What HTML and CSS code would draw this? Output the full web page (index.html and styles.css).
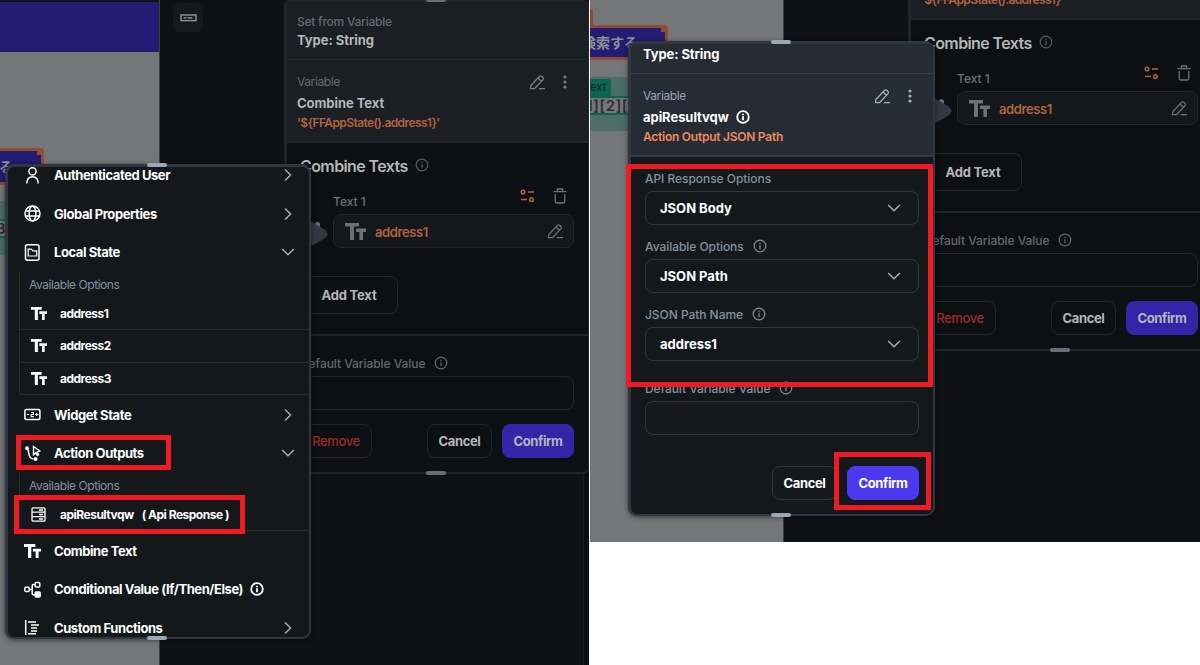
FILE: index.html
```html
<!DOCTYPE html>
<html lang="en">
  <head>
    <meta charset="utf-8">
    <title>Set from Variable</title>
    <link rel="stylesheet" href="styles.css">
  </head>
  <body>
    <svg class="sprite" width="0" height="0">
      <symbol id="pencil" viewBox="0 0 18 18"><path d="M2 12.2 11.2 2.4a1.6 1.6 0 0 1 2.3 0l1.3 1.3a1.6 1.6 0 0 1 0 2.3L6 15.4H1.6zM9.6 4.2l3.7 3.7M10.5 15.5H17"/></symbol>
      <symbol id="dots" viewBox="0 0 4 14"><g fill="currentColor" stroke="none"><circle cx="2" cy="2" r="1.6"/><circle cx="2" cy="7" r="1.6"/><circle cx="2" cy="12" r="1.6"/></g></symbol>
      <symbol id="info" viewBox="0 0 14 14"><circle cx="7" cy="7" r="5.8"/><path d="M7 6.3v4M7 3.7v1.5"/></symbol>
      <symbol id="right" viewBox="0 0 8 14"><path d="M1 1.5 6.6 7 1 12.5"/></symbol>
      <symbol id="down" viewBox="0 0 14 8"><path d="M1.2 1 7 6.8 12.8 1"/></symbol>
      <symbol id="tt" viewBox="0 0 21 17"><path fill="currentColor" stroke="none" d="M0 0h14v3.6H9V17H5V3.6H0zM11 5.6h10V9h-3v8h-3.600V9H11z"/></symbol>
      <symbol id="switches" viewBox="0 0 15 14"><circle cx="3" cy="3" r="1.8"/><path d="M8 3h6M1 10.600h6"/><circle cx="11.500" cy="10.600" r="1.800"/></symbol>
      <symbol id="trash" viewBox="0 0 14 16"><path d="M.5 3.600h13M4.500 3.400V1h5v2.400M2.200 6v7.500q0 1.500 1.500 1.500h6.600q1.500 0 1.500-1.500V6"/></symbol>
      <symbol id="user" viewBox="0 0 17 17"><circle cx="8.500" cy="4.300" r="3.600"/><path d="M2.700 16.500c.3-4.400 2-6.700 5.800-6.700s5.500 2.300 5.800 6.700"/></symbol>
      <symbol id="globe" viewBox="0 0 17 17"><circle cx="8.500" cy="8.500" r="7.500"/><ellipse cx="8.500" cy="8.500" rx="3.400" ry="7.500"/><path d="M1.600 6h13.800M1.600 11h13.800"/></symbol>
      <symbol id="state" viewBox="0 0 17 17"><rect x="1.500" y=".8" width="13.500" height="15.400" rx="2"/><path stroke-width="1.200" d="M4.200 5.200h3.200l1.300 1.600h4v5.200H4.200z"/></symbol>
      <symbol id="widget" viewBox="0 0 17 12"><rect x=".9" y=".9" width="15" height="10.200" rx="1.500"/><path stroke-width="1.200" d="M2.800 6h2.400M7 4h2.400v2H7.200v2.200h2.600M11 6h3.400M12.700 4.600v2.800"/></symbol>
      <symbol id="action" viewBox="0 0 17 17"><circle cx="3" cy="3.200" r="1.900" fill="currentColor" stroke="none"/><path d="M3.200 4c3 2-.2 9.500 6 10"/><circle cx="11.500" cy="14" r="2" fill="currentColor" stroke="none"/><path stroke-width="1.400" d="M9.500 1.500v8.300l2.200-1.900 1.600 2.600 1.300-.8-1.500-2.500 2.700-1.200z"/></symbol>
      <symbol id="server" viewBox="0 0 15 15"><rect x="1" y=".8" width="13" height="13.400" rx="1"/><path d="M1 5.200h13M1 9.700h13M8 3h4M8 7.500h4M8 12h4"/></symbol>
      <symbol id="branch" viewBox="0 0 17 17"><rect x=".8" y="6.200" width="4.400" height="4.400" rx="1"/><path d="M5.200 8.400h3M11 3.500H9.200q-1 0-1 1v8.200q0 1 1 1H11"/><rect x="11.200" y="1.400" width="4.600" height="4.600" rx="1"/><rect x="11.200" y="11" width="5" height="5" rx="1" fill="currentColor"/></symbol>
      <symbol id="functions" viewBox="0 0 17 17"><path d="M1.700 1v15M4 3h8M7 6h8M7 9h6M7 12h6M4 14.800h8"/></symbol>
      <symbol id="card" viewBox="0 0 17 8"><rect x="1" y="1" width="15" height="5.600"/><path d="M3.500 3.800h3M7.500 3.800h5"/></symbol>
    </svg>

    <div class="board">
      <!-- left screen -->
      <div class="screen screen-left">
        <div class="phone">
          <div class="appbar"></div>
          <div class="search-btn">る</div>
          <div class="text-widget"><div class="text-line">3</div></div>
        </div>
        <div class="tool"><svg class="icon card"><use href="#card"/></svg></div>
        <div class="rail"></div>

        <div class="panel">
          <div class="handle top"></div>
          <div class="panel-head">
            <p class="caption semi">Set from Variable</p>
            <p class="title">Type: String</p>
          </div>
          <div class="panel-var">
            <div class="var-top">
              <p class="caption">Variable</p>
              <svg class="icon pencil"><use href="#pencil"/></svg>
              <svg class="icon dots"><use href="#dots"/></svg>
            </div>
            <p class="title">Combine Text</p>
            <p class="code">'${FFAppState().address1}'</p>
          </div>
          <div class="combine">
            <div class="combine-title">Combine Texts <svg class="icon info"><use href="#info"/></svg></div>
            <div class="text-top">
              <span>Text 1</span>
              <svg class="icon switches"><use href="#switches"/></svg>
              <svg class="icon trash"><use href="#trash"/></svg>
            </div>
            <div class="text-field">
              <svg class="icon tt-big"><use href="#tt"/></svg>
              <span>address1</span>
              <svg class="icon pencil"><use href="#pencil"/></svg>
            </div>
            <div class="btn add">Add Text</div>
          </div>
          <div class="panel-foot">
            <div class="label">Default Variable Value <svg class="icon info"><use href="#info"/></svg></div>
            <div class="input"></div>
            <div class="buttons">
              <div class="btn remove">Remove</div>
              <div class="btn cancel">Cancel</div>
              <div class="btn confirm">Confirm</div>
            </div>
          </div>
          <div class="handle bottom"></div>
        </div>

        <div class="node"></div>
        <div class="arrow"></div>
        <div class="popover menu">
          <div class="handle top"></div>
          <div class="menu-clip">
            <div class="menu-list">
              <div class="item"><svg class="icon i17"><use href="#user"/></svg><span>Authenticated User</span><svg class="icon right"><use href="#right"/></svg></div>
              <div class="item"><svg class="icon i17"><use href="#globe"/></svg><span>Global Properties</span><svg class="icon right"><use href="#right"/></svg></div>
              <div class="item"><svg class="icon i17"><use href="#state"/></svg><span>Local State</span><svg class="icon down"><use href="#down"/></svg></div>
              <div class="sub">
                <p class="sub-label">Available Options</p>
                <div class="sub-item"><svg class="icon tt-small"><use href="#tt"/></svg>address1</div>
                <div class="sub-item"><svg class="icon tt-small"><use href="#tt"/></svg>address2</div>
                <div class="sub-item"><svg class="icon tt-small"><use href="#tt"/></svg>address3</div>
              </div>
              <div class="item"><svg class="icon i17"><use href="#widget"/></svg><span>Widget State</span><svg class="icon right"><use href="#right"/></svg></div>
              <div class="item"><svg class="icon i17"><use href="#action"/></svg><span>Action Outputs</span><svg class="icon down"><use href="#down"/></svg></div>
              <div class="sub">
                <p class="sub-label">Available Options</p>
                <div class="sub-item"><svg class="icon server"><use href="#server"/></svg>apiResultvqw <span class="type">( Api Response )</span></div>
              </div>
              <div class="item"><svg class="icon tt-mid"><use href="#tt"/></svg><span>Combine Text</span></div>
              <div class="item cond"><svg class="icon i17"><use href="#branch"/></svg><span>Conditional Value (If/Then/Else)</span><svg class="icon info"><use href="#info"/></svg></div>
              <div class="item"><svg class="icon i17"><use href="#functions"/></svg><span>Custom Functions</span><svg class="icon right"><use href="#right"/></svg></div>
            </div>
          </div>
          <div class="handle bottom"></div>
        </div>

        <div class="mark mark-action"></div>
        <div class="mark mark-result"></div>
      </div>

      <!-- right screen -->
      <div class="screen screen-right">
        <div class="phone">
          <div class="orange-tab"></div>
          <div class="search-btn">検索する</div>
          <div class="text-widget">
            <div class="tag">Text</div>
            <div class="text-line">[1][2][3]</div>
          </div>
        </div>

        <div class="panel">
          <div class="panel-head">
            <p class="caption semi">Set from Variable</p>
            <p class="title">Type: String</p>
          </div>
          <div class="panel-var">
            <div class="var-top">
              <p class="caption">Variable</p>
              <svg class="icon pencil"><use href="#pencil"/></svg>
              <svg class="icon dots"><use href="#dots"/></svg>
            </div>
            <p class="title">Combine Text</p>
            <p class="code">'${FFAppState().address1}'</p>
          </div>
          <div class="combine">
            <div class="combine-title">Combine Texts <svg class="icon info"><use href="#info"/></svg></div>
            <div class="text-top">
              <span>Text 1</span>
              <svg class="icon switches"><use href="#switches"/></svg>
              <svg class="icon trash"><use href="#trash"/></svg>
            </div>
            <div class="text-field">
              <svg class="icon tt-big"><use href="#tt"/></svg>
              <span>address1</span>
              <svg class="icon pencil"><use href="#pencil"/></svg>
            </div>
            <div class="btn add">Add Text</div>
          </div>
          <div class="panel-foot">
            <div class="label">Default Variable Value <svg class="icon info"><use href="#info"/></svg></div>
            <div class="input"></div>
            <div class="buttons">
              <div class="btn remove">Remove</div>
              <div class="btn cancel">Cancel</div>
              <div class="btn confirm">Confirm</div>
            </div>
          </div>
          <div class="handle bottom"></div>
        </div>

        <div class="node"></div>
        <div class="arrow"></div>
        <div class="popover result">
          <div class="handle top"></div>
          <div class="result-head">Type: String</div>
          <div class="result-var">
            <div class="var-top">
              <p class="caption">Variable</p>
              <svg class="icon pencil"><use href="#pencil"/></svg>
              <svg class="icon dots"><use href="#dots"/></svg>
            </div>
            <p class="title">apiResultvqw <svg class="icon info"><use href="#info"/></svg></p>
            <p class="code">Action Output JSON Path</p>
          </div>
          <div class="result-body">
            <div class="label">API Response Options</div>
            <div class="input select">JSON Body <svg class="icon down"><use href="#down"/></svg></div>
            <div class="label">Available Options <svg class="icon info"><use href="#info"/></svg></div>
            <div class="input select">JSON Path <svg class="icon down"><use href="#down"/></svg></div>
            <div class="label">JSON Path Name <svg class="icon info"><use href="#info"/></svg></div>
            <div class="input select">address1 <svg class="icon down"><use href="#down"/></svg></div>
            <div class="label label-last">Default Variable Value <svg class="icon info"><use href="#info"/></svg></div>
            <div class="input"></div>
            <div class="buttons">
              <div class="btn cancel">Cancel</div>
              <div class="btn confirm">Confirm</div>
            </div>
          </div>
          <div class="handle bottom"></div>
        </div>

        <div class="mark mark-options"></div>
        <div class="mark mark-confirm"></div>
      </div>
    </div>
  </body>
</html>
```
FILE: styles.css
```css
* {
  box-sizing: border-box;
}
body {
  margin: 0;
  background: #fff;
  font-family: Inter, "Noto Sans CJK JP", sans-serif;
  font-size: 13px;
  color: #fff;
  overflow: hidden;
}
p {
  margin: 0;
}
.sprite {
  position: absolute;
}
.board {
  display: flex;
  align-items: flex-start;
  gap: 1px;
}
.screen {
  position: relative;
  overflow: hidden;
  background: #0f1114;
  white-space: nowrap;
}
.screen-left {
  width: 589px;
  height: 665px;
}
.screen-right {
  width: 610px;
  height: 542px;
}

/* icons */
.icon {
  flex: none;
  fill: none;
  stroke: currentColor;
  stroke-width: 1.5;
}
.pencil { width: 17px; height: 17px; stroke-width: 1.3; }
.dots { width: 4px; height: 14px; }
.info { width: 14px; height: 14px; stroke-width: 1.2; }
.right { width: 8px; height: 14px; color: #a3b1c2; stroke-width: 1.4; }
.down { width: 14px; height: 8px; color: #a3b1c2; stroke-width: 1.4; }
.switches { width: 15px; height: 14px; }
.trash { width: 14px; height: 16px; stroke-width: 1.3; }
.tt-big { width: 21px; height: 17px; }
.tt-mid { width: 17px; height: 14px; }
.tt-small { width: 16px; height: 13px; }
.i17 { width: 17px; height: 17px; }
.server { width: 15px; height: 15px; stroke-width: 1.3; }
.card { width: 17px; height: 8px; color: #8b8c8d; }

/* phone canvas */
.phone {
  position: absolute;
  left: 0;
  top: 0;
  width: 160px;
  height: 100%;
  background: #757678;
  border-right: 1px solid #3b3c3e;
  overflow: hidden;
}
.screen-right .phone {
  width: 194px;
}
.screen-left .phone {
  background: linear-gradient(#0f1114 2px, #757678 2px);
}
.appbar {
  height: 50px;
  margin: 2px 0 96px;
  background: #241b74;
}
.search-btn {
  height: 37px;
  width: 44px;
  border: 3px solid #8c4d31;
  border-left: 0;
  border-radius: 0 4px 4px 0;
  background: linear-gradient(#8c4d31, #8c4d31) right top / 4px 4px no-repeat #241b74;
  color: #8f8f91;
  font-weight: 700;
  font-size: 14px;
  line-height: 30px;
}
.screen-left .search-btn {
  line-height: 32px;
  text-indent: -1px;
}
.text-widget {
  height: 54px;
  margin-top: 17px;
  background: #4d6d69;
}
.text-line {
  height: 19px;
  border: solid #0c6551;
  border-width: 2px 0;
  font-size: 15px;
  line-height: 15px;
  font-weight: 600;
  color: #2c2f30;
  background: #757678;
  text-indent: -10px;
  letter-spacing: 0.6px;
}
.screen-left .text-line {
  margin-top: 35px;
  text-indent: -4px;
}
.tag {
  width: 21px;
  height: 17px;
  padding-top: 1px;
  background: #0c6551;
  border-radius: 0 3px 0 0;
  color: #10201d;
  font-size: 11px;
  text-indent: -6px;
}
.screen-right .text-widget {
  padding-top: 2px;
}
.screen-left .text-widget {
  margin-top: 16px;
  padding-top: 0.1px;
}
.screen-left .text-line {
  margin-top: 18px;
}
.orange-tab {
  width: 3px;
  height: 16px;
  margin-top: 9px;
  background: #8c4d31;
}
.screen-right .search-btn {
  width: 78px;
  height: 35px;
  text-indent: -8px;
}
.tool {
  position: absolute;
  left: 173px;
  top: 3px;
  width: 30px;
  height: 29px;
  border-radius: 7px;
  background: #15191c;
  display: flex;
  align-items: center;
  justify-content: center;
}
.rail {
  position: absolute;
  left: 583px;
  top: 474px;
  width: 6px;
  height: 191px;
  background: #0c0d10;
  border-left: 1px solid #1a1c21;
}

/* dimmed panel below the popovers */
.panel {
  position: absolute;
  left: 284px;
  top: 0;
  width: 305px;
  height: 474px;
  border: 2px solid #20262d;
  border-left-width: 3px;
  border-right-width: 1px;
  border-radius: 6px;
  background: #0d1012;
  color: #b5b6b7;
}
.screen-right .panel {
  left: 318px;
  top: -123px;
}
.caption {
  font-size: 12px;
  line-height: 16px;
  letter-spacing: -0.4px;
  color: #636a75;
}
.semi {
  font-weight: 500;
  letter-spacing: -0.25px;
}
.title {
  font-size: 13px;
  line-height: 20px;
  font-weight: 700;
  letter-spacing: -0.05px;
}
.panel-head {
  height: 58px;
  padding: 12px 11px 0 10px;
  background: #1b1e23;
  border-bottom: 1px solid #22292f;
}
.panel-var {
  height: 83px;
  padding: 14px 11px 0 10px;
  background: #1b1e23;
  border-bottom: 2px solid #20262d;
}
.var-top {
  display: flex;
  align-items: center;
  height: 16px;
  padding-right: 10px;
  color: #777f89;
}
.var-top .caption {
  flex: 1;
}
.var-top .dots {
  margin-left: 17px;
}
.panel-var .title {
  margin-top: 3px;
}
.code {
  font-size: 12px;
  line-height: 20px;
  font-weight: 600;
  letter-spacing: -0.6px;
  color: #b16240;
}
.combine {
  height: 193px;
  padding: 12px 14px 0 13px;
  border-bottom: 2px solid #20262d;
}
.combine-title {
  display: flex;
  align-items: center;
  gap: 7px;
  height: 22px;
  font-size: 16px;
  font-weight: 600;
  letter-spacing: -0.6px;
}
.combine-title .info {
  color: #565c63;
  margin-top: -3px;
}
.text-top {
  display: flex;
  align-items: center;
  height: 16px;
  margin: 11px 7px 0 33px;
  color: #6b7178;
  font-size: 12px;
  font-weight: 500;
}
.text-top span {
  flex: 1;
  padding-top: 11px;
}
.text-top .switches {
  color: #b16240;
}
.text-top .trash {
  margin-left: 18px;
}
.text-field {
  display: flex;
  align-items: center;
  height: 34px;
  margin: 10px 0 28px 33px;
  padding: 0 9px 0 11px;
  border: 1px solid #22262b;
  border-radius: 8px;
  background: #15181b;
  color: #6b7178;
}
.text-field span {
  flex: 1;
  margin-left: 9px;
  padding-top: 1px;
  color: #b16240;
  font-weight: 600;
  letter-spacing: -0.4px;
}
.btn {
  display: flex;
  align-items: center;
  justify-content: center;
  height: 34px;
  border: 1px solid #22262b;
  border-radius: 8px;
  font-weight: 700;
  letter-spacing: -0.4px;
}
.btn.add {
  width: 98px;
  height: 38px;
  letter-spacing: -0.2px;
}
.panel-foot {
  padding: 17px 14px 0 13px;
}
.label {
  display: flex;
  align-items: center;
  gap: 9px;
  height: 20px;
  font-size: 12px;
  font-weight: 500;
  letter-spacing: -0.05px;
  color: #62686f;
}
.input {
  height: 34px;
  border: 1px solid #22262b;
  border-radius: 8px;
}
.panel-foot .input {
  margin: 3px 0 14px;
}
.buttons {
  display: flex;
  justify-content: flex-end;
  gap: 10px;
}
.cancel {
  width: 65px;
}
.confirm {
  width: 72px;
  background: #3425a8;
  border-color: #3425a8;
}
.remove {
  width: 72px;
  margin-right: auto;
  color: #9c2b2b;
  font-weight: 500;
}
.handle {
  position: absolute;
  left: 139px;
  width: 20px;
  height: 4px;
  border-radius: 2px;
  background: #666e77;
}
.handle.top {
  top: -4px;
}
.handle.bottom {
  bottom: -3px;
}

/* popovers */
.popover {
  position: absolute;
  width: 306px;
  height: 475px;
  border: 3px solid #2e3742;
  border-right-width: 2px;
  border-bottom-width: 2px;
  border-radius: 9px;
  background: #14181b;
  box-shadow: 0 1px 5px rgba(0, 0, 0, 0.55);
}
.popover .handle {
  left: 139px;
  background: #9aa7b5;
}
.menu {
  left: 5px;
  top: 164px;
}
.node {
  position: absolute;
  left: 315px;
  top: 222px;
  width: 5px;
  height: 6px;
  border-radius: 3px;
  background: #666a6f;
}
.arrow {
  position: absolute;
  left: 310px;
  top: 221px;
  width: 18px;
  height: 26px;
  background: #323943;
  clip-path: polygon(0 0, 85% 35%, 100% 50%, 85% 65%, 0 100%);
}
.screen-right .node {
  left: 349px;
  top: 99px;
}
.screen-right .arrow {
  left: 344px;
  top: 98px;
}
.menu-clip {
  height: 470px;
  overflow: hidden;
  border-radius: 6px;
}
.menu-list {
  margin-top: -11px;
}
.item {
  display: flex;
  align-items: center;
  height: 38.5px;
  padding: 0 17px 0 16px;
  font-weight: 700;
  letter-spacing: -0.42px;
}
.item span {
  flex: 1;
  margin-left: 13px;
}
.item .down {
  margin-right: -3px;
}
.item.cond span {
  flex: none;
}
.item .info {
  margin-left: 7px;
  stroke-width: 1.8;
}
.sub {
  margin: 0 0 0.5px 11px;
  border-left: 1px solid #252a2f;
}
.sub-label {
  height: 26px;
  padding-left: 9px;
  font-size: 12px;
  line-height: 26px;
  letter-spacing: -0.5px;
  color: #8491a3;
  letter-spacing: -0.45px;
}
.sub-item {
  display: flex;
  align-items: center;
  height: 32.5px;
  padding-left: 11px;
  border-bottom: 1px solid #252a2f;
  font-size: 12px;
  font-weight: 700;
  letter-spacing: -0.5px;
}
.sub-item .icon {
  margin-right: 13px;
}
.sub-item .server {
  margin-right: 14px;
}
.type {
  margin-left: 8px;
}

.result {
  left: 38px;
  top: 41px;
  width: 307px;
}
.result .handle {
  left: 140px;
}
.result-head {
  height: 30px;
  padding: 0 12px;
  border-bottom: 1px solid #363f4a;
  border-radius: 6px 6px 0 0;
  background: #262c34;
  font-weight: 700;
  line-height: 20px;
  letter-spacing: -0.1px;
}
.result-var {
  height: 83px;
  padding: 14px 12px 0;
  border-bottom: 2px solid #303944;
  background: #262c34;
}
.result-var .caption {
  color: #96a3b4;
}
.result-var .var-top {
  padding-right: 9px;
  color: #a3b1c2;
}
.result-var .title {
  display: flex;
  align-items: center;
  gap: 7px;
  margin-top: 3px;
}
.result-var .title .info {
  stroke-width: 1.8;
}
.result-var .code {
  letter-spacing: -0.25px;
  color: #f08a5d;
}
.result-body {
  padding: 11px 14px 0;
}
.result-body .label {
  color: #8491a0;
  margin-bottom: 3px;
}
.result-body .input {
  border-color: #303640;
}
.select {
  display: flex;
  align-items: center;
  justify-content: space-between;
  margin-bottom: 11px;
  padding: 0 17px 0 14px;
  font-weight: 700;
}
.result-body .label-last {
  margin-top: 17px;
}
.result-body .buttons {
  margin-top: 31px;
}
.result-body .cancel {
  border-color: #303640;
}
.result-body .confirm {
  background: #4b39ef;
  border-color: #4b39ef;
}

/* red highlight boxes */
.mark {
  position: absolute;
  border: 5px solid #ed1c24;
}
.mark-action {
  left: 16px;
  top: 435px;
  width: 155px;
  height: 35px;
}
.mark-result {
  left: 14px;
  top: 495px;
  width: 231px;
  height: 39px;
}
.mark-options {
  left: 36px;
  top: 164px;
  width: 307px;
  height: 223px;
}
.mark-confirm {
  left: 244px;
  top: 452px;
  width: 97px;
  height: 58px;
}
```
